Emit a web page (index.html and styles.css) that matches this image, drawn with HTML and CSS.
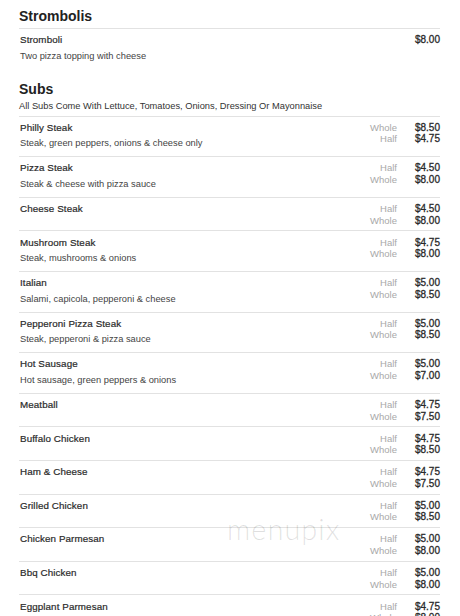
FILE: index.html
```html
<!DOCTYPE html>
<html>
<head>
<meta charset="utf-8">
<link rel="stylesheet" href="styles.css">
</head>
<body>
<div class="menu">
  <section class="section first">
    <h2 class="sec-title">Strombolis</h2>
    <div class="item">
      <div class="info">
        <div class="name">Stromboli</div>
        <div class="desc">Two pizza topping with cheese</div>
      </div>
      <div class="prices"><span class="label"></span><span class="price">$8.00</span></div>
    </div>
  </section>
  <section class="section">
    <h2 class="sec-title">Subs</h2>
    <div class="sec-sub">All Subs Come With Lettuce, Tomatoes, Onions, Dressing Or Mayonnaise</div>
    <div class="item">
      <div class="info"><div class="name">Philly Steak</div><div class="desc">Steak, green peppers, onions &amp; cheese only</div></div>
      <div class="prices"><span class="label">Whole</span><span class="price">$8.50</span><span class="label">Half</span><span class="price">$4.75</span></div>
    </div>
    <div class="item">
      <div class="info"><div class="name">Pizza Steak</div><div class="desc">Steak &amp; cheese with pizza sauce</div></div>
      <div class="prices"><span class="label">Half</span><span class="price">$4.50</span><span class="label">Whole</span><span class="price">$8.00</span></div>
    </div>
    <div class="item">
      <div class="info"><div class="name">Cheese Steak</div></div>
      <div class="prices"><span class="label">Half</span><span class="price">$4.50</span><span class="label">Whole</span><span class="price">$8.00</span></div>
    </div>
    <div class="item">
      <div class="info"><div class="name">Mushroom Steak</div><div class="desc">Steak, mushrooms &amp; onions</div></div>
      <div class="prices"><span class="label">Half</span><span class="price">$4.75</span><span class="label">Whole</span><span class="price">$8.00</span></div>
    </div>
    <div class="item">
      <div class="info"><div class="name">Italian</div><div class="desc">Salami, capicola, pepperoni &amp; cheese</div></div>
      <div class="prices"><span class="label">Half</span><span class="price">$5.00</span><span class="label">Whole</span><span class="price">$8.50</span></div>
    </div>
    <div class="item">
      <div class="info"><div class="name">Pepperoni Pizza Steak</div><div class="desc">Steak, pepperoni &amp; pizza sauce</div></div>
      <div class="prices"><span class="label">Half</span><span class="price">$5.00</span><span class="label">Whole</span><span class="price">$8.50</span></div>
    </div>
    <div class="item">
      <div class="info"><div class="name">Hot Sausage</div><div class="desc">Hot sausage, green peppers &amp; onions</div></div>
      <div class="prices"><span class="label">Half</span><span class="price">$5.00</span><span class="label">Whole</span><span class="price">$7.00</span></div>
    </div>
    <div class="item">
      <div class="info"><div class="name">Meatball</div></div>
      <div class="prices"><span class="label">Half</span><span class="price">$4.75</span><span class="label">Whole</span><span class="price">$7.50</span></div>
    </div>
    <div class="item">
      <div class="info"><div class="name">Buffalo Chicken</div></div>
      <div class="prices"><span class="label">Half</span><span class="price">$4.75</span><span class="label">Whole</span><span class="price">$8.50</span></div>
    </div>
    <div class="item">
      <div class="info"><div class="name">Ham &amp; Cheese</div></div>
      <div class="prices"><span class="label">Half</span><span class="price">$4.75</span><span class="label">Whole</span><span class="price">$7.50</span></div>
    </div>
    <div class="item">
      <div class="info"><div class="name">Grilled Chicken</div></div>
      <div class="prices"><span class="label">Half</span><span class="price">$5.00</span><span class="label">Whole</span><span class="price">$8.50</span></div>
    </div>
    <div class="item">
      <div class="info"><div class="name">Chicken Parmesan</div></div>
      <div class="prices"><span class="label">Half</span><span class="price">$5.00</span><span class="label">Whole</span><span class="price">$8.00</span></div>
    </div>
    <div class="item">
      <div class="info"><div class="name">Bbq Chicken</div></div>
      <div class="prices"><span class="label">Half</span><span class="price">$5.00</span><span class="label">Whole</span><span class="price">$8.00</span></div>
    </div>
    <div class="item">
      <div class="info"><div class="name">Eggplant Parmesan</div></div>
      <div class="prices"><span class="label">Half</span><span class="price">$4.75</span><span class="label">Whole</span><span class="price">$8.00</span></div>
    </div>
  </section>
</div>
<div class="watermark">menupix</div>
</body>
</html>
```
FILE: styles.css
```css
html, body {
  margin: 0;
  padding: 0;
  background: #fff;
}
body {
  font-family: "Liberation Sans", Arial, sans-serif;
  color: #333;
  overflow: hidden;
  height: 616px;
  position: relative;
}
.menu {
  width: 421px;
  margin-left: 19px;
}
.section {
  margin-top: 10px;
}
.section.first {
  margin-top: 6px;
}
.sec-title {
  margin: 0;
  font-size: 14px;
  line-height: 20px;
  font-weight: bold;
  color: #222;
  padding-bottom: 2px;
}
.sec-sub {
  font-size: 9.3px;
  line-height: 14px;
  color: #333;
  margin-top: -2px;
  padding-bottom: 3px;
}
.item {
  display: flex;
  justify-content: space-between;
  align-items: flex-start;
  border-top: 1px solid #e2e2e2;
  padding: 4.3px 0 4.3px 1px;
}
.info {
  flex: 1;
}
.name {
  font-size: 9.8px;
  line-height: 14.5px;
  font-weight: normal;
  letter-spacing: 0.1px;
  color: #2a2a2a;
  -webkit-text-stroke: 0.2px #2a2a2a;
}
.desc {
  font-size: 9.3px;
  line-height: 16.5px;
  color: #444;
}
.prices {
  display: grid;
  grid-template-columns: auto 26px;
  column-gap: 17px;
  padding-top: 1px;
  text-align: right;
}
.label {
  font-size: 9.5px;
  line-height: 11.5px;
  color: #a8a8a8;
}
.price {
  font-size: 10px;
  line-height: 11.5px;
  font-weight: normal;
  color: #2a2a2a;
  -webkit-text-stroke: 0.3px #2a2a2a;
}
.watermark {
  position: absolute;
  left: 227px;
  top: 511px;
  font-family: Lato, "Open Sans", sans-serif;
  font-weight: 300;
  font-size: 29px;
  letter-spacing: 1px;
  color: rgba(0, 0, 0, 0.12);
  line-height: 36px;
}
```
